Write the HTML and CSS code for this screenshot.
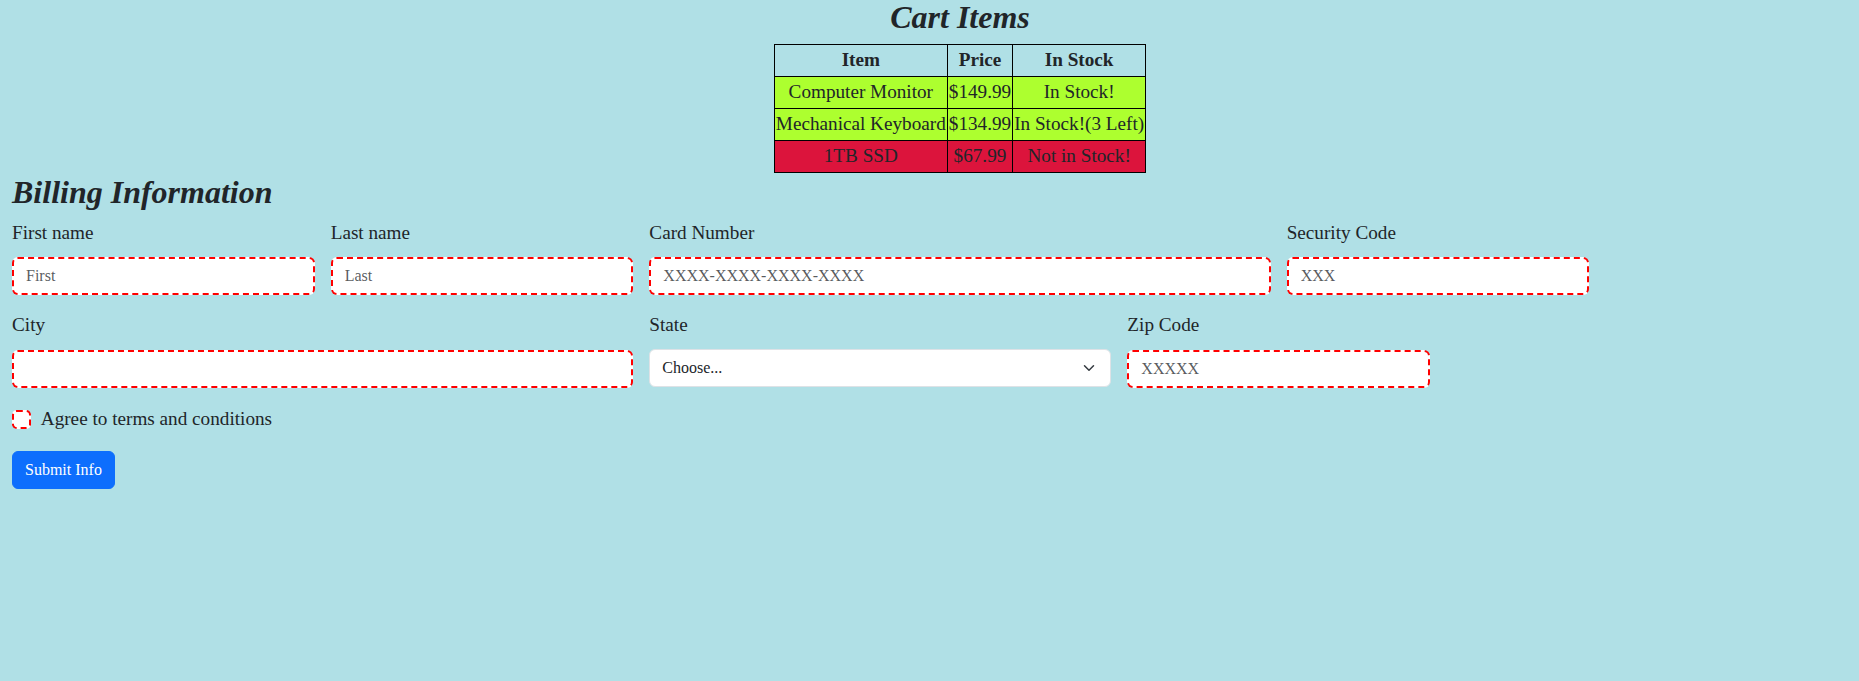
FILE: index.html
```html
<!DOCTYPE html>
<html lang="en">
<head>
<meta charset="utf-8">
<title>Cart</title>
<link rel="stylesheet" href="styles.css">
</head>
<body>
<div class="page">
  <h2 class="heading heading-cart">Cart Items</h2>
  <table class="cart">
    <thead>
      <tr><th>Item</th><th>Price</th><th>In Stock</th></tr>
    </thead>
    <tbody>
      <tr class="in-stock"><td>Computer Monitor</td><td>$149.99</td><td>In Stock!</td></tr>
      <tr class="in-stock"><td>Mechanical Keyboard</td><td>$134.99</td><td>In Stock!(3 Left)</td></tr>
      <tr class="out-stock"><td>1TB SSD</td><td>$67.99</td><td>Not in Stock!</td></tr>
    </tbody>
  </table>
  <h2 class="heading">Billing Information</h2>
  <form class="billing">
    <div class="field span-2">
      <label class="field-label" for="first">First name</label>
      <input class="text-input" id="first" type="text" placeholder="First">
    </div>
    <div class="field span-2">
      <label class="field-label" for="last">Last name</label>
      <input class="text-input" id="last" type="text" placeholder="Last">
    </div>
    <div class="field span-4">
      <label class="field-label" for="card">Card Number</label>
      <input class="text-input" id="card" type="text" placeholder="XXXX-XXXX-XXXX-XXXX">
    </div>
    <div class="field span-2">
      <label class="field-label" for="sec">Security Code</label>
      <input class="text-input" id="sec" type="text" placeholder="XXX">
    </div>
    <div class="field span-4 row-start">
      <label class="field-label" for="city">City</label>
      <input class="text-input" id="city" type="text">
    </div>
    <div class="field span-3">
      <label class="field-label" for="state">State</label>
      <div class="select-wrap">
        <select class="select-input" id="state">
          <option>Choose...</option>
        </select>
        <svg class="chevron" width="16" height="12" viewBox="0 0 16 16" aria-hidden="true"><path d="m2 5 6 6 6-6" fill="none" stroke="#343a40" stroke-width="2" stroke-linecap="round" stroke-linejoin="round"/></svg>
      </div>
    </div>
    <div class="field span-2">
      <label class="field-label" for="zip">Zip Code</label>
      <input class="text-input" id="zip" type="text" placeholder="XXXXX">
    </div>
    <div class="check full">
      <input class="check-input" id="agree" type="checkbox">
      <label class="check-label" for="agree">Agree to terms and conditions</label>
    </div>
    <div class="full">
      <button class="submit" type="submit">Submit Info</button>
    </div>
  </form>
</div>
</body>
</html>
```
FILE: styles.css
```css
html {
  overflow: hidden;
}

body {
  margin: 0;
  background: #b0e0e6;
  color: #212529;
  font-family: "Liberation Serif", "Times New Roman", serif;
  font-size: 19.2px;
  line-height: 1.5;
}

.page {
  width: 1920px;
  box-sizing: border-box;
  padding: 0 12px;
}

.heading {
  margin: 0 0 8px;
  font-size: 32px;
  line-height: 1.2;
  font-weight: bold;
  font-style: italic;
}

.heading-cart {
  text-align: center;
  margin-top: -2px;
}

.cart {
  margin: 0 auto;
  border-collapse: collapse;
}

.cart th,
.cart td {
  border: 1px solid #000;
  padding: 1px;
  text-align: center;
}

.cart th {
  font-weight: bold;
}

.in-stock {
  background: #adff2f;
}

.out-stock {
  background: #dc143c;
}

.billing {
  display: grid;
  grid-template-columns: repeat(12, 1fr);
  column-gap: 16px;
  row-gap: 16px;
}

.span-2 { grid-column: span 2; }
.span-3 { grid-column: span 3; }
.span-4 { grid-column: span 4; }
.row-start { grid-column: 1 / span 4; }
.full { grid-column: 1 / -1; }

.field-label {
  display: block;
  margin-bottom: 9.5px;
}

.text-input {
  display: block;
  width: 100%;
  height: 38px;
  box-sizing: border-box;
  padding: 5px 12px;
  border: 2px dashed #f00;
  border-radius: 6px;
  background: #fff;
  color: #212529;
  font-family: "Liberation Serif", "Times New Roman", serif;
  font-size: 16px;
  line-height: 24px;
  outline: none;
}

.text-input::placeholder {
  color: rgba(33, 37, 41, 0.75);
}

.select-wrap {
  position: relative;
}

.select-input {
  display: block;
  width: 100%;
  height: 38px;
  box-sizing: border-box;
  padding: 6px 36px 6px 12px;
  border: 1px solid #dee2e6;
  border-radius: 6px;
  background: #fff;
  color: #212529;
  font-family: "Liberation Serif", "Times New Roman", serif;
  font-size: 16px;
  line-height: 24px;
  appearance: none;
  -webkit-appearance: none;
  margin-top: -0.5px;
}

.chevron {
  position: absolute;
  right: 14px;
  top: 13px;
  pointer-events: none;
}

.check {
  display: flex;
  align-items: flex-start;
  gap: 9.6px;
  min-height: 28.8px;
  margin-top: 1.5px;
  margin-bottom: 1px;
}

.check-input {
  appearance: none;
  -webkit-appearance: none;
  width: 19.2px;
  height: 19.2px;
  margin: 4.8px 0 0;
  box-sizing: border-box;
  border: 2px dashed #f00;
  border-radius: 4.8px;
  background: #fff;
  flex: none;
}

.submit {
  display: inline-block;
  height: 38px;
  box-sizing: border-box;
  padding: 6px 12px;
  border: 1px solid #0d6efd;
  border-radius: 6px;
  background: #0d6efd;
  color: #fff;
  font-family: "Liberation Serif", "Times New Roman", serif;
  font-size: 16px;
  line-height: 24px;
}
```
